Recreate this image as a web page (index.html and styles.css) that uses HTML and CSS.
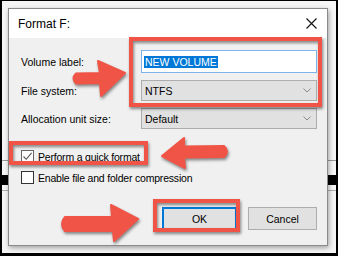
FILE: index.html
```html
<!DOCTYPE html>
<html>
<head>
<meta charset="utf-8">
<link rel="stylesheet" href="styles.css">
</head>
<body>
<div class="frame">
  <div class="dialog">
    <div class="titlebar">
      <span class="title">Format F:</span>
      <svg class="close" width="11" height="11" viewBox="0 0 11 11"><path d="M0.5 0.5 L10.5 10.5 M10.5 0.5 L0.5 10.5" stroke="#111" stroke-width="1.1" fill="none"/></svg>
    </div>
    <div class="content">
      <div class="fields">
        <label class="lbl">Volume label:</label>
        <div class="input"><span class="sel">NEW VOLUME</span></div>
        <label class="lbl">File system:</label>
        <div class="combo"><span>NTFS</span><svg class="chev" width="8" height="5" viewBox="0 0 8 5"><path d="M0.5 0.5 L4 4 L7.5 0.5" stroke="#8a8a8a" fill="none" stroke-width="1"/></svg></div>
        <label class="lbl">Allocation unit size:</label>
        <div class="combo"><span>Default</span><svg class="chev" width="8" height="5" viewBox="0 0 8 5"><path d="M0.5 0.5 L4 4 L7.5 0.5" stroke="#8a8a8a" fill="none" stroke-width="1"/></svg></div>
      </div>
      <div class="checks">
        <div class="check"><span class="box checked"><svg width="11" height="11" viewBox="0 0 11 11"><path d="M1.5 5.5 L4.2 8.3 L9.6 1.8" stroke="#555" stroke-width="1.1" fill="none"/></svg></span><span class="ctext">Perform a quick format</span></div>
        <div class="check"><span class="box"></span><span class="ctext">Enable file and folder compression</span></div>
      </div>
      <div class="buttons">
        <div class="btn default">OK</div>
        <div class="btn cancel">Cancel</div>
      </div>
    </div>
  </div>
  <svg class="notes" width="338" height="256" viewBox="0 0 338 256">
    <g fill="none" stroke="#f05446" stroke-width="4">
      <rect x="131" y="39" width="189" height="66"/>
      <rect x="11" y="143" width="135" height="20"/>
      <rect x="155" y="201" width="83" height="29"/>
    </g>
    <g fill="#f05446" stroke="#f05446" stroke-width="2" stroke-linejoin="round">
      <path d="M76 73.5 L100 73 L98 61 L125 73 L101 96 L100 83 L76 83.5 Q71 78.5 76 73.5 Z"/>
      <path d="M162 156 L184 138 L184 146.5 L224 146 Q230 151.5 224 157 L184 157.5 L185 168 Z"/>
      <path d="M65 217 L112 217 L111 205 L138 219 L114 241 L113 231 L65 231 Q59 224 65 217 Z"/>
    </g>
  </svg>
</div>
</body>
</html>
```

FILE: styles.css
```css
html, body {
  margin: 0;
  padding: 0;
}
body {
  width: 338px;
  height: 256px;
  overflow: hidden;
  font-family: "Liberation Sans", Arial, sans-serif;
  font-size: 10.5px;
  color: #000;
}
.frame {
  position: relative;
  box-sizing: border-box;
  width: 338px;
  height: 256px;
  border-style: solid;
  border-color: #000;
  border-width: 1px 2px 3px 2px;
  padding: 7px 0 0 6px;
  background: linear-gradient(to bottom, #f6f6f6 0, #f6f6f6 159px, #9a9a9a 159px, #9a9a9a 160px, #f6f6f6 160px, #f6f6f6 174px, #000 174px, #000 184px, #f6f6f6 184px, #f6f6f6 189px, #b0b0b0 189px, #b0b0b0 190px, #f6f6f6 190px);
}
.dialog {
  position: relative;
  box-sizing: border-box;
  width: 320px;
  height: 238px;
  border: 1px solid #8a8a8a;
  box-shadow: 1px 2px 5px rgba(0, 0, 0, 0.35);
  display: flex;
  flex-direction: column;
  background: #f0f0f0;
}
.titlebar {
  height: 29px;
  background: #fff;
  display: flex;
  align-items: center;
  justify-content: space-between;
  padding: 0 10px 0 9px;
  font-size: 12px;
}
.close {
  display: block;
}
.content {
  flex: 1;
  background: #f0f0f0;
  padding: 12px 10px 0 11px;
}
.fields {
  display: grid;
  grid-template-columns: 121px 176px;
  grid-template-rows: 23px 21px 21px;
  row-gap: 7px;
  align-items: center;
}
.lbl {
  padding-left: 1px;
}
.input {
  box-sizing: border-box;
  height: 23px;
  border: 1px solid #7eb4ea;
  background: #fff;
  display: flex;
  align-items: center;
  padding-left: 2px;
}
.sel {
  background: #0078d7;
  color: #fff;
  line-height: 12px;
  height: 12px;
  padding: 0 1px;
}
.combo {
  box-sizing: border-box;
  height: 21px;
  border: 1px solid #adadad;
  background: #e1e1e1;
  display: flex;
  align-items: center;
  justify-content: space-between;
  padding: 0 5px 0 3px;
}
.chev {
  display: block;
}
.checks {
  margin-top: 21px;
  display: flex;
  flex-direction: column;
  gap: 8px;
}
.check {
  display: flex;
  align-items: center;
  height: 13px;
  gap: 4px;
  padding-left: 1px;
}
.ctext {
  letter-spacing: -0.2px;
}
.box {
  box-sizing: border-box;
  width: 13px;
  height: 13px;
  border: 1px solid #333;
  background: #fff;
  display: flex;
  align-items: center;
  justify-content: center;
}
.box.checked {
  border-color: #666;
}
.box svg {
  display: block;
}
.buttons {
  margin-top: 23px;
  display: flex;
  justify-content: flex-end;
  gap: 11px;
}
.btn {
  box-sizing: border-box;
  height: 23px;
  background: #e1e1e1;
  border: 1px solid #adadad;
  display: flex;
  align-items: center;
  justify-content: center;
}
.btn.default {
  width: 75px;
  border: 2px solid #0078d7;
}
.btn.cancel {
  width: 69px;
}
.notes {
  position: absolute;
  left: -2px;
  top: -1px;
  filter: drop-shadow(1px 2px 1.5px rgba(0, 0, 0, 0.45));
}
```
